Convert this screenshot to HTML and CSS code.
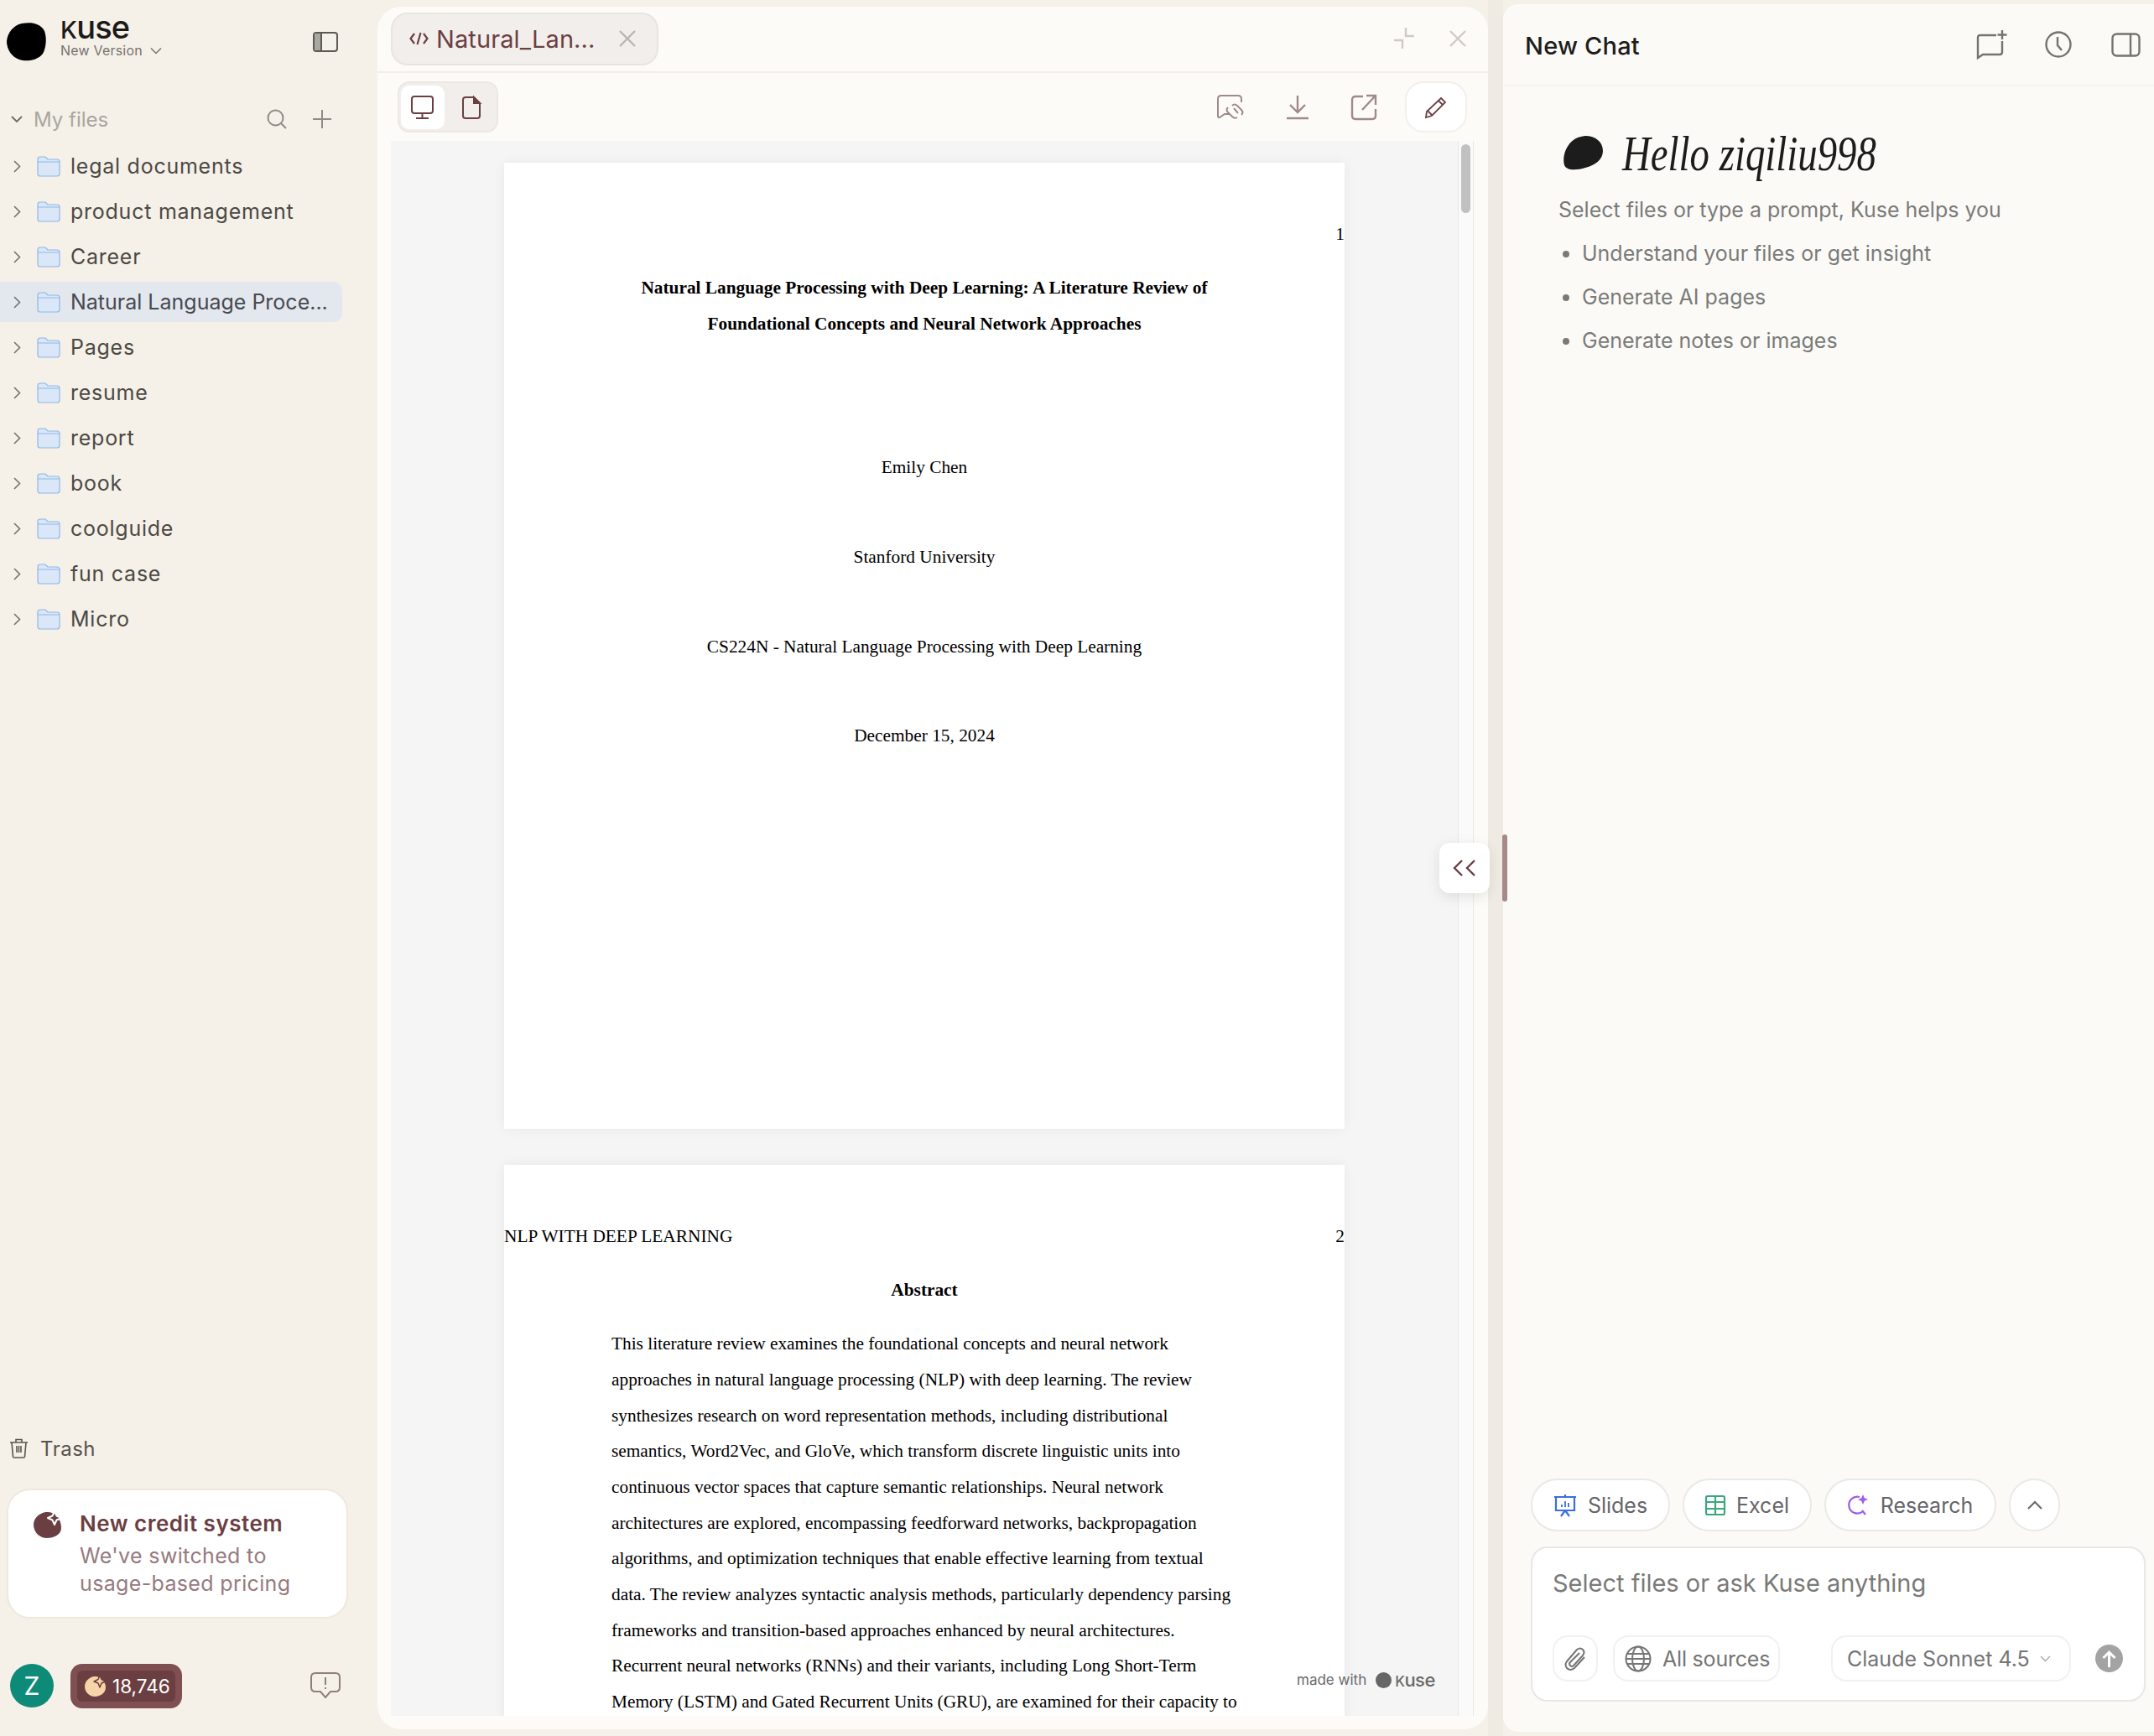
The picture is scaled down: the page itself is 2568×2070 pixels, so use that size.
FILE: index.html
```html
<!DOCTYPE html>
<html lang="en">
<head>
<meta charset="utf-8">
<title>Kuse</title>
<link rel="stylesheet" href="styles.css">
</head>
<body>
<div class="app">
  <aside class="side">
    <header class="brand">
      <svg class="brand-blob" width="47" height="46" viewBox="0 0 47 46"><path fill="#000" d="M18 1C28-1 40 0 45 10 48 18 47 30 43 37 37 45 24 47 15 44 6 41 0 32 0 22 1 12 8 3 18 1Z"/></svg>
      <div class="brand-text">
        <div class="brand-name"><span class="brand-k">K</span>use</div>
        <div class="brand-ver">New Version <svg width="14" height="9" viewBox="0 0 14 9" fill="none" stroke="#77746e" stroke-width="1.5"><path d="M1 1.500l6 6 6-6"/></svg></div>
      </div>
      <svg class="brand-toggle" width="30" height="24" viewBox="0 0 30 24"><rect x="1" y="1" width="28" height="22" rx="3" fill="none" stroke="#5c5a55" stroke-width="2"/><path d="M2 2h8v20H2z" fill="#aaa79f"/><path d="M10 1v22" stroke="#5c5a55" stroke-width="2"/></svg>
    </header>

    <div class="files-head">
      <svg width="14" height="9" viewBox="0 0 14 9" fill="none" stroke="#6d6a64" stroke-width="1.800"><path d="M1 1l6 6 6-6"/></svg>
      <span class="files-title">My files</span>
      <svg class="files-search" width="24" height="24" viewBox="0 0 24 24" fill="none" stroke="#8f8c85" stroke-width="2"><circle cx="10.500" cy="10.500" r="9"/><path d="M17 17l6 6"/></svg>
      <svg class="files-add" width="24" height="24" viewBox="0 0 24 24" fill="none" stroke="#8f8c85" stroke-width="2"><path d="M12 1v22M1 12h22"/></svg>
    </div>

    <ul class="tree">
      <li class="tree-row"><svg class="caret" width="9" height="15" viewBox="0 0 9 15" fill="none" stroke="#76736d" stroke-width="1.600"><path d="M1 1l6.500 6.500L1 14"/></svg><svg class="folder" width="28" height="25" viewBox="0 0 28 25"><path d="M1 4q0-3 3-3h6l3 3h11q3 0 3 3v14q0 3-3 3H4q-3 0-3-3z" fill="#d9e7f8" stroke="#90b7e6" stroke-width="1.200"/><path d="M1 7h26" stroke="#90b7e6" stroke-width="1"/></svg><span>legal documents</span></li>
      <li class="tree-row"><svg class="caret" width="9" height="15" viewBox="0 0 9 15" fill="none" stroke="#76736d" stroke-width="1.600"><path d="M1 1l6.500 6.500L1 14"/></svg><svg class="folder" width="28" height="25" viewBox="0 0 28 25"><path d="M1 4q0-3 3-3h6l3 3h11q3 0 3 3v14q0 3-3 3H4q-3 0-3-3z" fill="#d9e7f8" stroke="#90b7e6" stroke-width="1.200"/><path d="M1 7h26" stroke="#90b7e6" stroke-width="1"/></svg><span>product management</span></li>
      <li class="tree-row"><svg class="caret" width="9" height="15" viewBox="0 0 9 15" fill="none" stroke="#76736d" stroke-width="1.600"><path d="M1 1l6.500 6.500L1 14"/></svg><svg class="folder" width="28" height="25" viewBox="0 0 28 25"><path d="M1 4q0-3 3-3h6l3 3h11q3 0 3 3v14q0 3-3 3H4q-3 0-3-3z" fill="#d9e7f8" stroke="#90b7e6" stroke-width="1.200"/><path d="M1 7h26" stroke="#90b7e6" stroke-width="1"/></svg><span>Career</span></li>
      <li class="tree-row is-active"><svg class="caret" width="9" height="15" viewBox="0 0 9 15" fill="none" stroke="#76736d" stroke-width="1.600"><path d="M1 1l6.500 6.500L1 14"/></svg><svg class="folder" width="28" height="25" viewBox="0 0 28 25"><path d="M1 4q0-3 3-3h6l3 3h11q3 0 3 3v14q0 3-3 3H4q-3 0-3-3z" fill="#d9e7f8" stroke="#90b7e6" stroke-width="1.200"/><path d="M1 7h26" stroke="#90b7e6" stroke-width="1"/></svg><span>Natural Language Proce...</span></li>
      <li class="tree-row"><svg class="caret" width="9" height="15" viewBox="0 0 9 15" fill="none" stroke="#76736d" stroke-width="1.600"><path d="M1 1l6.500 6.500L1 14"/></svg><svg class="folder" width="28" height="25" viewBox="0 0 28 25"><path d="M1 4q0-3 3-3h6l3 3h11q3 0 3 3v14q0 3-3 3H4q-3 0-3-3z" fill="#d9e7f8" stroke="#90b7e6" stroke-width="1.200"/><path d="M1 7h26" stroke="#90b7e6" stroke-width="1"/></svg><span>Pages</span></li>
      <li class="tree-row"><svg class="caret" width="9" height="15" viewBox="0 0 9 15" fill="none" stroke="#76736d" stroke-width="1.600"><path d="M1 1l6.500 6.500L1 14"/></svg><svg class="folder" width="28" height="25" viewBox="0 0 28 25"><path d="M1 4q0-3 3-3h6l3 3h11q3 0 3 3v14q0 3-3 3H4q-3 0-3-3z" fill="#d9e7f8" stroke="#90b7e6" stroke-width="1.200"/><path d="M1 7h26" stroke="#90b7e6" stroke-width="1"/></svg><span>resume</span></li>
      <li class="tree-row"><svg class="caret" width="9" height="15" viewBox="0 0 9 15" fill="none" stroke="#76736d" stroke-width="1.600"><path d="M1 1l6.500 6.500L1 14"/></svg><svg class="folder" width="28" height="25" viewBox="0 0 28 25"><path d="M1 4q0-3 3-3h6l3 3h11q3 0 3 3v14q0 3-3 3H4q-3 0-3-3z" fill="#d9e7f8" stroke="#90b7e6" stroke-width="1.200"/><path d="M1 7h26" stroke="#90b7e6" stroke-width="1"/></svg><span>report</span></li>
      <li class="tree-row"><svg class="caret" width="9" height="15" viewBox="0 0 9 15" fill="none" stroke="#76736d" stroke-width="1.600"><path d="M1 1l6.500 6.500L1 14"/></svg><svg class="folder" width="28" height="25" viewBox="0 0 28 25"><path d="M1 4q0-3 3-3h6l3 3h11q3 0 3 3v14q0 3-3 3H4q-3 0-3-3z" fill="#d9e7f8" stroke="#90b7e6" stroke-width="1.200"/><path d="M1 7h26" stroke="#90b7e6" stroke-width="1"/></svg><span>book</span></li>
      <li class="tree-row"><svg class="caret" width="9" height="15" viewBox="0 0 9 15" fill="none" stroke="#76736d" stroke-width="1.600"><path d="M1 1l6.500 6.500L1 14"/></svg><svg class="folder" width="28" height="25" viewBox="0 0 28 25"><path d="M1 4q0-3 3-3h6l3 3h11q3 0 3 3v14q0 3-3 3H4q-3 0-3-3z" fill="#d9e7f8" stroke="#90b7e6" stroke-width="1.200"/><path d="M1 7h26" stroke="#90b7e6" stroke-width="1"/></svg><span>coolguide</span></li>
      <li class="tree-row"><svg class="caret" width="9" height="15" viewBox="0 0 9 15" fill="none" stroke="#76736d" stroke-width="1.600"><path d="M1 1l6.500 6.500L1 14"/></svg><svg class="folder" width="28" height="25" viewBox="0 0 28 25"><path d="M1 4q0-3 3-3h6l3 3h11q3 0 3 3v14q0 3-3 3H4q-3 0-3-3z" fill="#d9e7f8" stroke="#90b7e6" stroke-width="1.200"/><path d="M1 7h26" stroke="#90b7e6" stroke-width="1"/></svg><span>fun case</span></li>
      <li class="tree-row"><svg class="caret" width="9" height="15" viewBox="0 0 9 15" fill="none" stroke="#76736d" stroke-width="1.600"><path d="M1 1l6.500 6.500L1 14"/></svg><svg class="folder" width="28" height="25" viewBox="0 0 28 25"><path d="M1 4q0-3 3-3h6l3 3h11q3 0 3 3v14q0 3-3 3H4q-3 0-3-3z" fill="#d9e7f8" stroke="#90b7e6" stroke-width="1.200"/><path d="M1 7h26" stroke="#90b7e6" stroke-width="1"/></svg><span>Micro</span></li>
    </ul>

    <div class="trash">
      <svg width="23" height="24" viewBox="0 0 23 24" fill="none" stroke="#5a574f" stroke-width="1.600"><path d="M1 5h21M8 5V1.500h7V5M3 5l1.500 17q0 1 1.500 1h11q1.500 0 1.500-1L20 5M9 9v8M11.500 9v8M14 9v8"/></svg>
      <span>Trash</span>
    </div>

    <section class="notice">
      <svg class="notice-icon" width="34" height="33" viewBox="0 0 34 33"><path d="M15 1C24 0 33 7 33 20 33 28 24 32 16 32 7 32 0 25 0 16 0 8 7 2 15 1Z" fill="#6b3f42"/><path d="M25 0l2.500 5.500L33 8l-5.500 2.500L25 16l-2.500-5.500L17 8l5.500-2.500z" fill="#6b3f42" stroke="#fff" stroke-width="2" stroke-linejoin="round"/></svg>
      <div>
        <h3 class="notice-title">New credit system</h3>
        <p class="notice-text">We've switched to<br>usage-based pricing</p>
      </div>
    </section>

    <footer class="account">
      <div class="avatar">Z</div>
      <div class="credits">
        <div class="credits-inner">
          <svg width="26" height="26" viewBox="0 0 26 26"><path d="M11 2C18 1 25 7 25 15 25 22 18 26 12 26 5 26 0 20 0 14 0 8 5 3 11 2Z" fill="#f6d3a8"/><path d="M18 1l2 4.500L25 8l-5 2-2 5-2-5-5-2 5-2.500z" fill="#f6d3a8" stroke="#6b3f42" stroke-width="1.500" stroke-linejoin="round"/></svg>
          <span>18,746</span>
        </div>
      </div>
      <svg class="feedback" width="36" height="32" viewBox="0 0 36 32" fill="none" stroke="#8e7f7a" stroke-width="2"><path d="M6 1h24q5 0 5 5v12q0 5-5 5h-6l-6 7-6-7H6q-5 0-5-5V6q0-5 5-5z"/><path d="M18 6v9M18 18v2"/></svg>
    </footer>
  </aside>

  <main class="viewer">
    <div class="tabbar">
      <div class="tab">
        <svg width="23" height="16" viewBox="0 0 23 16" fill="none" stroke="#6b3f42" stroke-width="2.200"><path d="M6 2L1.500 8 6 14M17 2l4.500 6L17 14M13.500 1L9.500 15"/></svg>
        <span class="tab-name">Natural_Lan...</span>
        <svg class="tab-close" width="20" height="20" viewBox="0 0 20 20" stroke="#bab5b2" stroke-width="2.400"><path d="M1 1l18 18M19 1L1 19"/></svg>
      </div>
      <svg class="tab-min" width="26" height="26" viewBox="0 0 26 26" fill="none" stroke="#cfcac7" stroke-width="2.400"><path d="M15 0v10h10M1 15h10v10"/></svg>
      <svg class="tab-x" width="20" height="20" viewBox="0 0 20 20" stroke="#cfcac7" stroke-width="2.400"><path d="M1 1l18 18M19 1L1 19"/></svg>
    </div>

    <div class="toolbar">
      <div class="segment">
        <div class="seg-btn is-on"><svg width="28" height="28" viewBox="0 0 28 28" fill="none" stroke="#6b3f42" stroke-width="2"><rect x="1" y="1" width="25" height="20" rx="3"/><path d="M13.500 21v5M6 27h15"/></svg></div>
        <div class="seg-btn"><svg width="22" height="27" viewBox="0 0 22 27" fill="none" stroke="#6b3f42" stroke-width="2"><path d="M4 1h10l7 7v15q0 3-3 3H4q-3 0-3-3V4q0-3 3-3z"/><path d="M14 1l7 7h-7z" fill="#6b3f42"/></svg></div>
      </div>
      <div class="tools">
        <svg width="32" height="29" viewBox="0 0 32 29" fill="none" stroke="#a08a89" stroke-width="2"><path d="M15 23H9l-6 4q-2 .5-2-1.500V5q0-4 4-4h20q4 0 4 4v4"/><path d="M18 13q3-3 6 0l5 5q3 3 0 6M24 27q-3 2-6-1l-5-5q-3-3 0-6"/><path d="M20 16l5 6"/></svg>
        <svg width="28" height="29" viewBox="0 0 28 29" fill="none" stroke="#a08a89" stroke-width="2.400"><path d="M14 1v19M5 12l9 9 9-9M1 28h26"/></svg>
        <svg width="30" height="30" viewBox="0 0 30 30" fill="none" stroke="#a08a89" stroke-width="2.400"><path d="M14 2H5Q1 2 1 6v19q0 4 4 4h20q4 0 4-4v-8M13 18L28 2M18 1h11v11"/></svg>
        <div class="edit-btn"><svg width="26" height="26" viewBox="0 0 26 26" fill="none" stroke="#6b3f42" stroke-width="1.800"><path d="M19 2l5 5L8 23l-7 2 1-7zM16 5l5 5M3 17l6 6"/></svg></div>
      </div>
    </div>

    <div class="doc">
      <div class="doc-scroll">
        <article class="page">
          <div class="page-head"><span></span><span>1</span></div>
          <h1 class="title">Natural Language Processing with Deep Learning: A Literature Review of<br>Foundational Concepts and Neural Network Approaches</h1>
          <p class="cover cover-first">Emily Chen</p>
          <p class="cover">Stanford University</p>
          <p class="cover">CS224N - Natural Language Processing with Deep Learning</p>
          <p class="cover">December 15, 2024</p>
        </article>
        <article class="page">
          <div class="page-head"><span>NLP WITH DEEP LEARNING</span><span>2</span></div>
          <h2 class="abs-title">Abstract</h2>
          <p class="abs">This literature review examines the foundational concepts and neural network<br>approaches in natural language processing (NLP) with deep learning. The review<br>synthesizes research on word representation methods, including distributional<br>semantics, Word2Vec, and GloVe, which transform discrete linguistic units into<br>continuous vector spaces that capture semantic relationships. Neural network<br>architectures are explored, encompassing feedforward networks, backpropagation<br>algorithms, and optimization techniques that enable effective learning from textual<br>data. The review analyzes syntactic analysis methods, particularly dependency parsing<br>frameworks and transition-based approaches enhanced by neural architectures.<br>Recurrent neural networks (RNNs) and their variants, including Long Short-Term<br>Memory (LSTM) and Gated Recurrent Units (GRU), are examined for their capacity to</p>
        </article>
      </div>
      <div class="scrollbar"><div class="thumb"></div></div>
      <div class="made"><span>made with</span><svg width="19" height="19" viewBox="0 0 19 19"><circle cx="9.500" cy="9.500" r="9.500" fill="#666"/></svg><b><span class="made-k">K</span>use</b></div>
    </div>
    <div class="collapse"><svg width="28" height="20" viewBox="0 0 28 20" fill="none" stroke="#6b3f42" stroke-width="2.400"><path d="M11 1L2 10l9 9M26 1l-9 9 9 9"/></svg></div>
  </main>

  <div class="gutter"><div class="grip"></div></div>

  <section class="chat">
    <header class="chat-head">
      <h2 class="chat-title">New Chat</h2>
      <svg width="36" height="35" viewBox="0 0 36 35" fill="none" stroke="#757370" stroke-width="2.400"><path d="M24 6H5Q2 6 2 9v24l6-4h20q3 0 3-3V13"/><path d="M31 0v11M25.500 5.500h11" stroke="#757370"/></svg>
      <svg width="32" height="32" viewBox="0 0 32 32" fill="none" stroke="#757370" stroke-width="2.400"><circle cx="16" cy="16" r="14.500"/><path d="M15 7v10l5 6"/></svg>
      <svg width="35" height="29" viewBox="0 0 35 29" fill="none" stroke="#757370" stroke-width="2.400"><rect x="1.500" y="1.500" width="32" height="26" rx="5"/><path d="M23 1v27"/></svg>
    </header>
    <div class="welcome">
      <div class="hello">
        <svg width="47" height="41" viewBox="0 0 47 41"><path fill="#1c1c1c" d="M26 0C38 0 47 7 47 18 47 28 38 35 26 38 16 41 4 42 1 35-1 27 1 18 6 11 11 4 17 1 26 0Z"/></svg>
        <h1 class="hello-text">Hello ziqiliu998</h1>
      </div>
      <p class="intro">Select files or type a prompt, Kuse helps you</p>
      <ul class="points">
        <li>Understand your files or get insight</li>
        <li>Generate AI pages</li>
        <li>Generate notes or images</li>
      </ul>
    </div>
    <div class="composer">
      <div class="chips">
        <div class="chip chip-slides"><svg width="28" height="26" viewBox="0 0 28 26" fill="none" stroke="#3a6fe0" stroke-width="2.200"><path d="M14 0v3M1 3h26M3 3v16h22V3M14 19l-5 7M14 19l5 7"/><path d="M10 15v-3M14 15V8M18 15v-5" stroke-width="1.800"/></svg><span>Slides</span></div>
        <div class="chip chip-excel"><svg width="24" height="24" viewBox="0 0 24 24" fill="none" stroke="#3da67f" stroke-width="2.200"><rect x="1" y="1" width="22" height="22" rx="2"/><path d="M1 8h22M1 16h22M12 1v22"/></svg><span>Excel</span></div>
        <div class="chip chip-research"><svg width="26" height="25" viewBox="0 0 26 25" fill="none" stroke="#9a5fe8" stroke-width="2.200"><path d="M14 3A10 10 0 1 0 18 20M17 19l4 5"/><path d="M18 0l1.800 4.200L24 6l-4.200 1.800L18 12l-1.800-4.200L12 6l4.200-1.800z" fill="#9a5fe8" stroke="none"/></svg><span>Research</span></div>
        <div class="chip chip-up"><svg width="18" height="11" viewBox="0 0 18 11" fill="none" stroke="#66656a" stroke-width="2"><path d="M1 10l8-8 8 8"/></svg></div>
      </div>
      <div class="inputbox">
        <div class="placeholder">Select files or ask Kuse anything</div>
        <div class="input-tools">
          <div class="btn btn-attach"><svg width="27" height="30" viewBox="0 0 27 30" fill="none" stroke="#757575" stroke-width="2"><path d="M24 13L12 26q-5 4-9 0-3-4 0-8L15 4q4-3 7 0t0 7L11 23q-2 2-4 0t0-4L18 8"/></svg></div>
          <div class="btn btn-src"><svg width="32" height="32" viewBox="0 0 32 32" fill="none" stroke="#757575" stroke-width="2"><circle cx="16" cy="16" r="14.500"/><ellipse cx="16" cy="16" rx="7" ry="14.500"/><path d="M3 10h26M3 22h26M1.500 16h29"/></svg><span>All sources</span></div>
          <div class="btn btn-model"><span>Claude Sonnet 4.5</span><svg width="13" height="8" viewBox="0 0 13 8" fill="none" stroke="#a7a7a7" stroke-width="1.400"><path d="M1 1l5.500 5.500L12 1"/></svg></div>
          <div class="send"><svg width="17" height="22" viewBox="0 0 17 22" fill="none" stroke="#fff" stroke-width="3"><path d="M8.500 21V3M1.500 10l7-7 7 7"/></svg></div>
        </div>
      </div>
    </div>
  </section>
</div>
</body>
</html>
```

FILE: styles.css
```css
* { box-sizing: border-box; }
html, body { margin: 0; padding: 0; height: 100%; }
body { background: #f5f0e8; font-family: Inter, "Noto Sans", sans-serif; overflow: hidden; }
h1, h2, h3, p, ul { margin: 0; padding: 0; font-weight: inherit; font-size: inherit; }
ul { list-style: none; }
svg { display: block; flex: none; overflow: visible; }

.app { display: flex; width: 2568px; height: 2070px; }

/* sidebar */
.side { width: 450px; flex: none; height: 100%; display: flex; flex-direction: column; }
.brand { display: flex; align-items: flex-start; height: 79px; padding: 27px 47px 0 8px; }
.brand-text { margin-left: 17px; margin-top: -15px; }
.brand-name { font-size: 38px; line-height: 40px; font-weight: 500; color: #1c1a18; letter-spacing: -.8px; }
.brand-k { font-size: 29px; }
.brand-ver { display: flex; align-items: center; gap: 9px; font-size: 16px; line-height: 20px; color: #77746e; letter-spacing: .2px; margin-top: -6px; }
.brand-toggle { margin-left: auto; margin-top: 11px; }

.files-head { display: flex; align-items: center; height: 48px; margin-top: 39px; padding-left: 13px; }
.files-title { margin-left: 13px; font-size: 24px; color: #a9a69f; }
.files-search { margin-left: auto; }
.files-add { margin-left: 30px; margin-right: 54px; }

.tree { margin-top: 8px; display: flex; flex-direction: column; gap: 6px; }
.tree-row { display: flex; align-items: center; width: 408px; height: 48px; padding-left: 16px; font-size: 25px; color: #4b4944; border-radius: 0 10px 10px 0; white-space: nowrap; letter-spacing: .75px; }
.tree-row.is-active { background: #e3e7ee; color: #474a50; letter-spacing: 0; }
.caret { margin-right: 19px; }
.folder { margin-right: 12px; }

.trash { display: flex; align-items: center; gap: 14px; margin-top: auto; padding-left: 11px; height: 40px; font-size: 24px; color: #57544d; letter-spacing: .5px; position: relative; top: 1px; }

.notice { display: flex; align-items: flex-start; gap: 21px; width: 407px; height: 155px; margin: 29px 0 0 8px; padding: 25px 30px; background: #fff; border: 2px solid #eee8dd; border-radius: 28px; }
.notice-title { font-size: 26px; line-height: 34px; font-weight: 600; color: #6b3f42; margin-top: -2px; letter-spacing: .5px; }
.notice-text { font-size: 25px; line-height: 33px; color: #967a7e; margin-top: 5px; letter-spacing: .35px; }

.account { display: flex; align-items: center; height: 54px; margin: 53px 0 33px; padding-left: 12px; }
.avatar { width: 52px; height: 52px; border-radius: 50%; background: #0d8a78; color: #fff; font-size: 30px; line-height: 52px; text-align: center; }
.credits { margin-left: 20px; width: 133px; height: 53px; padding: 8px; background: #7f4f52; border-radius: 14px; }
.credits-inner { display: flex; align-items: center; gap: 7px; height: 37px; padding-left: 9px; background: #6b3f42; border-radius: 6px; color: #fff; font-size: 22.5px; }
.feedback { margin-left: 153px; }

/* viewer */
.viewer { position: relative; width: 1324px; flex: none; height: 2054px; margin-top: 8px; background: #fdfbf8; border-radius: 28px; padding: 0 0 16px; display: flex; flex-direction: column; }
.tabbar { display: flex; align-items: center; height: 79px; padding: 7px 26px 8px 16px; border-bottom: 2px solid #f2eeea; flex: none; }
.tab { display: flex; align-items: center; width: 319px; height: 63px; padding-left: 20px; background: #f2eeeb; border: 2px solid #e9e4df; border-radius: 20px; }
.tab-name { margin-left: 9px; font-size: 29px; color: #6b3f42; letter-spacing: .1px; white-space: nowrap; }
.tab-close { margin-left: auto; margin-right: 25px; }
.tab-min { margin-left: auto; }
.tab-x { margin-left: 41px; }

.toolbar { display: flex; align-items: center; height: 81px; padding: 0 25px 0 24px; flex: none; }
.segment { display: flex; gap: 6px; width: 120px; height: 61px; padding: 3px 2px; background: #f2eeeb; border: 2px solid #ece8e4; border-radius: 14px; }
.seg-btn { width: 52px; height: 52px; display: flex; align-items: center; justify-content: center; border-radius: 10px; }
.seg-btn.is-on { background: #fff; }
.tools { margin-left: auto; display: flex; align-items: center; gap: 50px; }
.edit-btn { width: 74px; height: 61px; margin-left: -16px; display: flex; align-items: center; justify-content: center; background: #fff; border: 2px solid #f3efeb; border-radius: 22px; }

.doc { flex: 1; min-height: 0; margin: 0 17px 0 16px; display: flex; background: #f5f5f5; position: relative; overflow: hidden; }
.doc-scroll { flex: 1; min-width: 0; height: 100%; overflow: hidden; padding-top: 26px; display: flex; flex-direction: column; align-items: center; gap: 43px; }
.page { width: 1002px; height: 1152px; flex: none; background: #fff; padding-top: 64px; box-shadow: 0 0 14px rgba(0,0,0,.06); font-family: "Liberation Serif", serif; font-size: 21.33px; line-height: 42.67px; color: #000; }
.page-head { display: flex; justify-content: space-between; }
.title { font-weight: 700; text-align: center; margin-top: 21px; line-height: 43.3px; }
.cover { text-align: center; margin-top: 64px; }
.cover-first { margin-top: 128px; }
.abs-title { font-weight: 700; text-align: center; margin-top: 21px; }
.abs { margin: 22px 0 0 128px; white-space: nowrap; }
.scrollbar { width: 19px; flex: none; background: #fafafa; border-left: 1px solid #e8e8e8; border-right: 1px solid #e8e8e8; padding: 4px 3px; }
.thumb { width: 11px; height: 82px; background: #c1c1c1; border-radius: 6px; }
.made { position: absolute; left: 1080px; bottom: 30px; display: flex; align-items: center; gap: 10px; font-size: 17px; color: #6a6a6a; }
.made svg { margin-left: 1px; margin-right: -6px; }
.made b { font-size: 22px; font-weight: 500; letter-spacing: -.5px; }
.made-k { font-size: 17px; }
.collapse { position: absolute; left: 1266px; top: 997px; width: 60px; height: 60px; display: flex; align-items: center; justify-content: center; background: #fff; border-radius: 12px; box-shadow: 0 4px 16px rgba(0,0,0,.1); }

/* gutter */
.gutter { width: 18px; flex: none; height: 100%; background: #f0ebe2; display: flex; align-items: center; justify-content: flex-end; }
.grip { width: 6px; height: 80px; background: #a68a88; border-radius: 3px; margin-right: -5px; position: relative; z-index: 1; }

/* chat */
.chat { flex: 1; min-width: 0; height: 2060px; margin-top: 5px; background: #fbfaf7; border-radius: 18px 0 0 18px; display: flex; flex-direction: column; }
.chat-head { display: flex; align-items: center; height: 98px; padding: 0 16px 0 26px; border-bottom: 2px solid #f7f5f1; flex: none; }
.chat-title { font-size: 29px; font-weight: 500; color: #1d1d1b; margin-right: auto; margin-top: 3px; letter-spacing: .2px; }
.chat-head svg:nth-of-type(2) { margin: 0 47px 0 46px; }
.welcome { padding: 58px 0 0 66px; flex: 1; }
.hello { display: flex; align-items: center; gap: 23px; margin-left: 6px; height: 43px; }
.hello-text { font-family: "Liberation Serif", serif; font-style: italic; font-size: 60px; line-height: 64px; color: #1c1c1c; transform: scaleX(.78); transform-origin: left center; white-space: nowrap; }
.intro { font-size: 25px; line-height: 34px; color: #7a7a78; margin-top: 29px; }
.points { margin-top: 18px; }
.points li { position: relative; padding-left: 28px; font-size: 25px; line-height: 34px; color: #7a7a78; margin-bottom: 18px; }
.points li::before { content: ""; position: absolute; left: 5px; top: 14px; width: 8px; height: 8px; border-radius: 50%; background: #7a7a78; }

.composer { padding: 0 10px 36px 33px; }
.chips { display: flex; gap: 15px; }
.chip { height: 63px; display: flex; align-items: center; justify-content: center; gap: 13px; background: #fff; border: 2px solid #ebe9e6; border-radius: 32px; font-size: 25px; color: #66656a; }
.chip-slides { width: 166px; }
.chip-excel { width: 154px; }
.chip-research { width: 205px; }
.chip-up { width: 61px; }
.inputbox { margin-top: 18px; height: 185px; background: #fff; border: 2px solid #e8e7e4; border-radius: 20px; padding: 0 24px; }
.placeholder { font-size: 29px; line-height: 40px; color: #7a7a78; margin-top: 22px; }
.input-tools { display: flex; align-items: center; height: 55px; margin-top: 42px; }
.btn { height: 55px; display: flex; align-items: center; background: #fff; border: 2px solid #f2f1ee; border-radius: 18px; font-size: 25px; color: #757575; }
.btn-attach { width: 54px; justify-content: center; }
.btn-src { width: 199px; margin-left: 18px; padding-left: 12px; gap: 13px; letter-spacing: -.2px; }
.btn-model { width: 286px; margin-left: 61px; padding-left: 17px; gap: 12px; }
.send { width: 33px; height: 33px; margin-left: 29px; border-radius: 50%; background: #a3a3a3; display: flex; align-items: center; justify-content: center; }
```
